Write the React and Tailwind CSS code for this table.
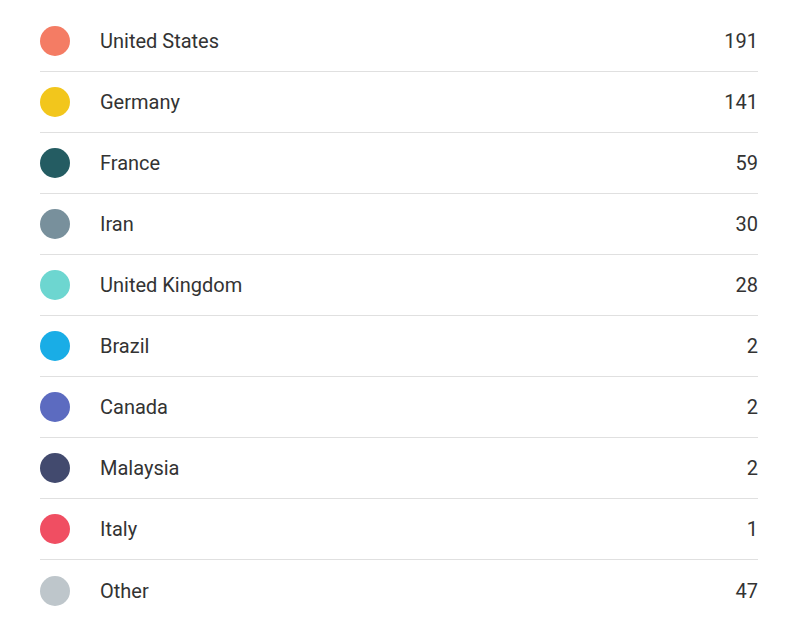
import React from 'react'

const countries = [
  { name: 'United States', value: 191, color: 'bg-[#f47c64]' },
  { name: 'Germany', value: 141, color: 'bg-[#f2c61c]' },
  { name: 'France', value: 59, color: 'bg-[#245c62]' },
  { name: 'Iran', value: 30, color: 'bg-[#78909c]' },
  { name: 'United Kingdom', value: 28, color: 'bg-[#6dd6d0]' },
  { name: 'Brazil', value: 2, color: 'bg-[#19ade6]' },
  { name: 'Canada', value: 2, color: 'bg-[#5c6bc0]' },
  { name: 'Malaysia', value: 2, color: 'bg-[#424a6e]' },
  { name: 'Italy', value: 1, color: 'bg-[#f04e62]' },
  { name: 'Other', value: 47, color: 'bg-[#bec6cb]' }
]

const App = () => {
  return (
    <div className="w-[788px] h-[630px] bg-white pt-[11px] pl-[40px] pr-[30px] font-['Roboto',sans-serif] text-[20px] text-[#333333]">
      {countries.map((c, index) => (
        <div
          key={index}
          className={`flex items-center h-[61px] ${index < countries.length - 1 ? 'border-b border-[#e0e0e0]' : ''}`}
        >
          <div className="flex items-center h-[60px] w-full">
            <span className={`w-[30px] h-[30px] rounded-full ${c.color} shrink-0`} />
            <span className="ml-[30px] flex-1 leading-[24px]">{c.name}</span>
            <span className="leading-[24px]">{c.value}</span>
          </div>
        </div>
      ))}
    </div>
  )
}

export default App
